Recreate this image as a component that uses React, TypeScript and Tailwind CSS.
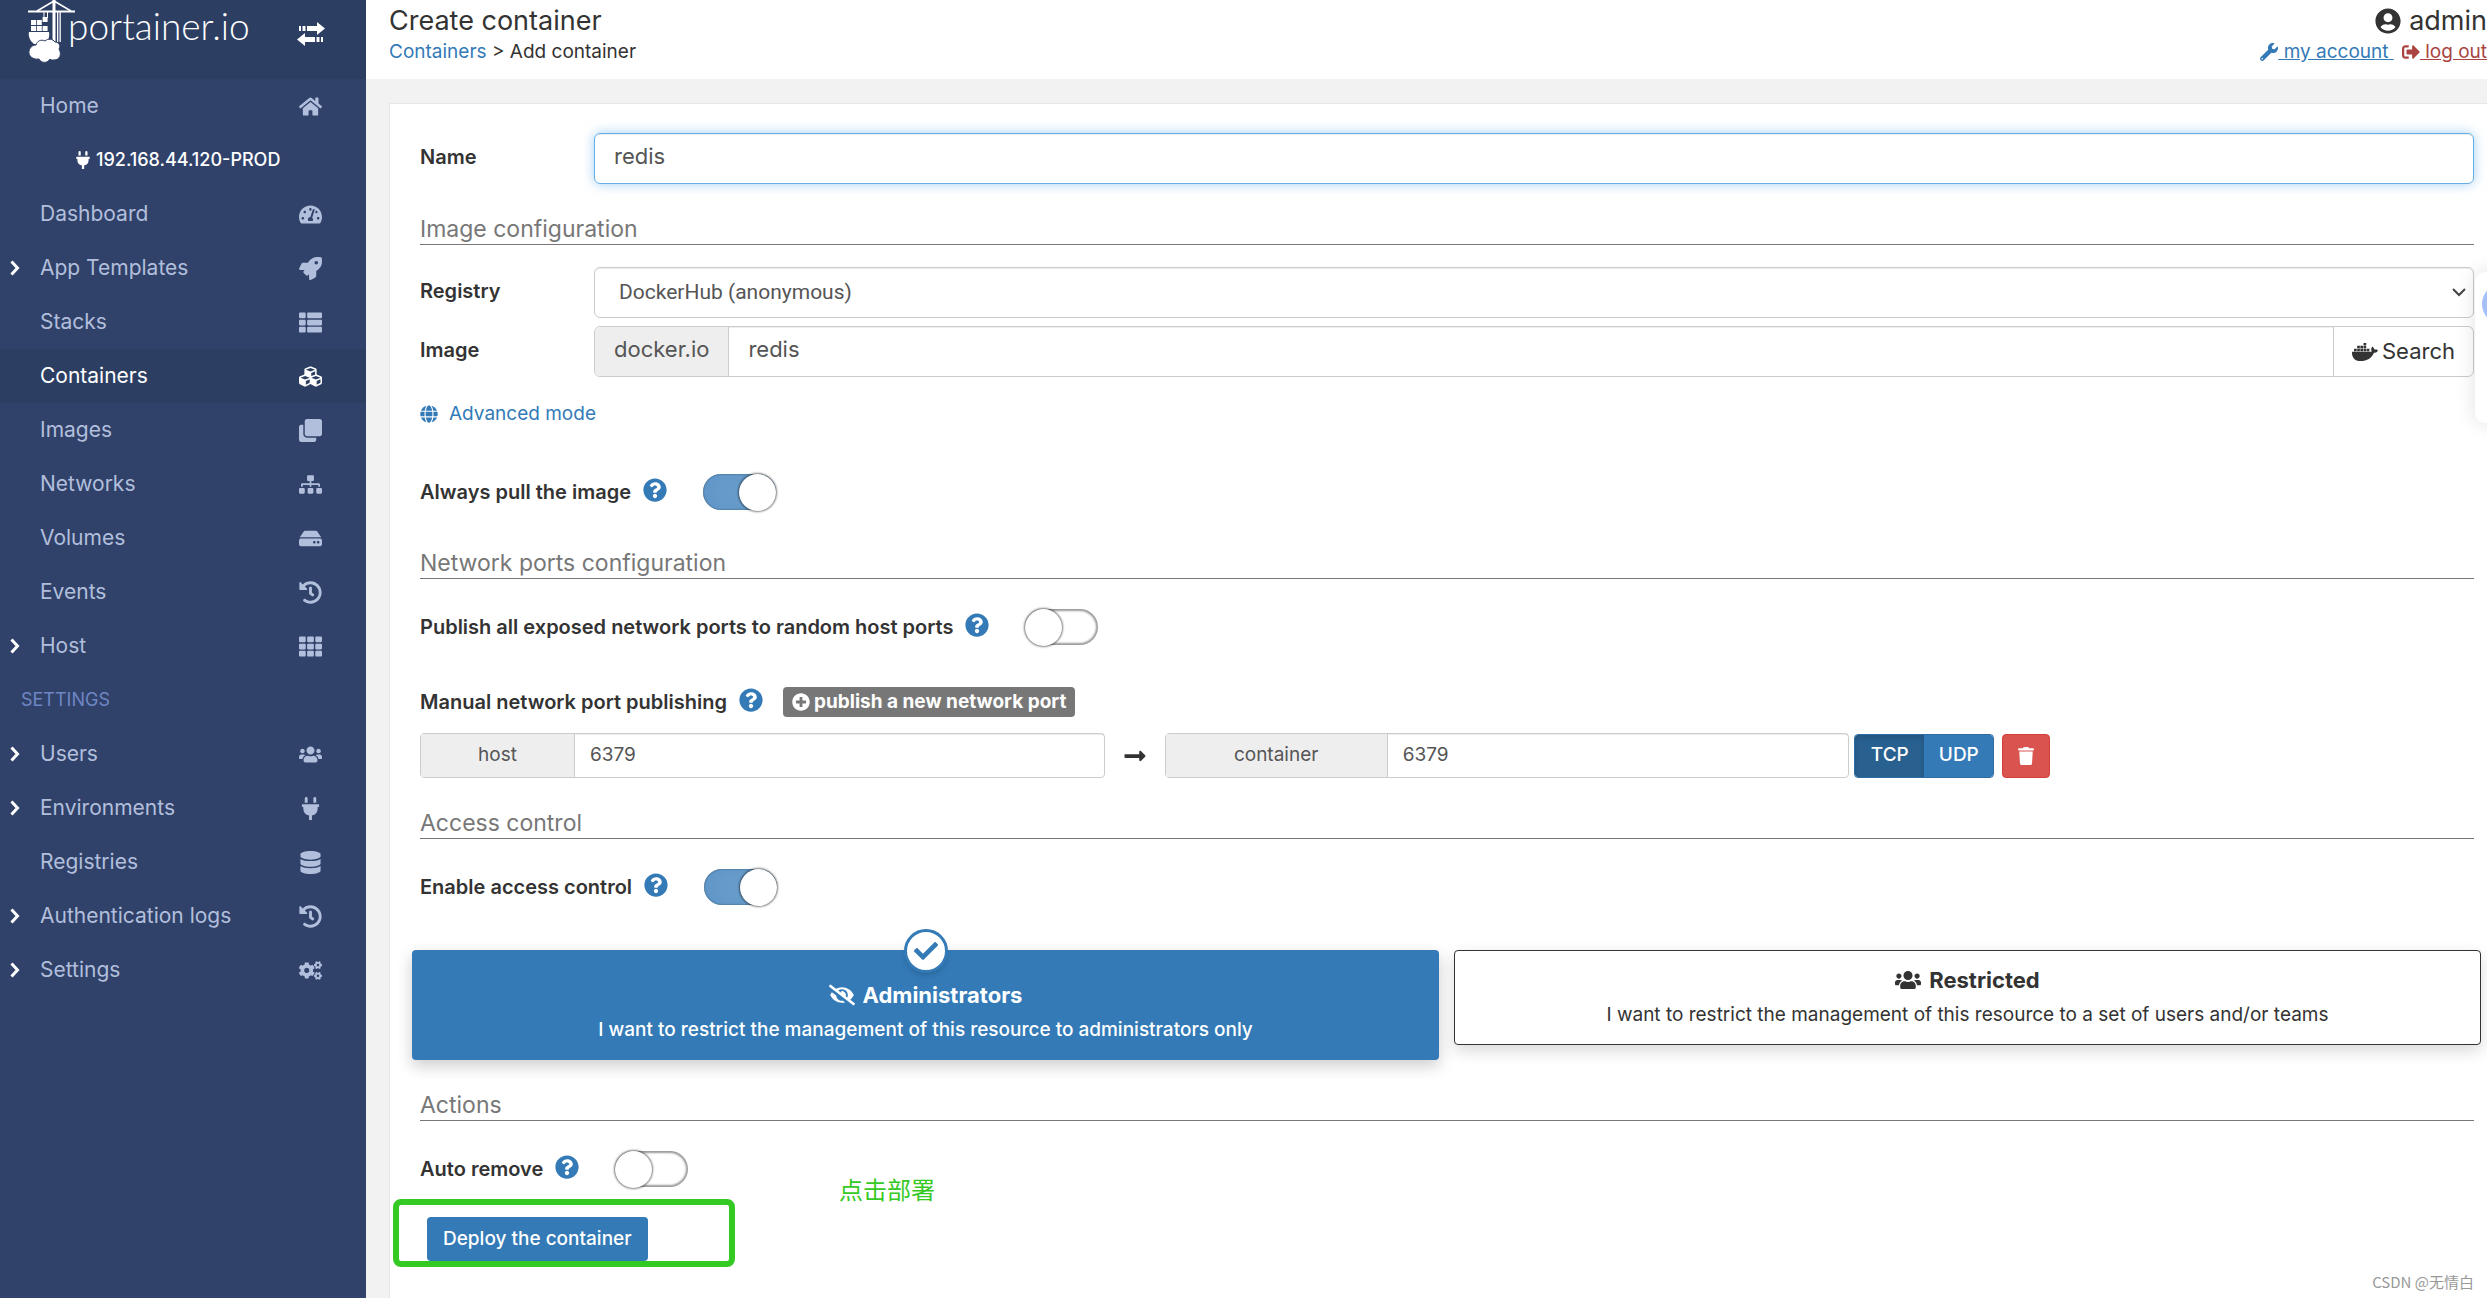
import { useState } from "react";
import type { ReactNode } from "react";
import type { IconType } from "react-icons";
import {
  FaCheck, FaClone, FaCogs, FaCubes, FaDatabase, FaDocker, FaEyeSlash, FaGlobe, FaHdd, FaHistory, FaHome,
  FaLongArrowAltRight, FaPlug, FaPlusCircle, FaQuestionCircle, FaRocket, FaSignOutAlt, FaSitemap,
  FaTachometerAlt, FaTh, FaThList, FaTrash, FaUserCircle, FaUsers, FaWrench,
} from "react-icons/fa";

type MenuItem = {
  label: string;
  icon: IconType;
  expandable?: boolean;
  active?: boolean;
};

const mainMenu: MenuItem[] = [
  { label: "Dashboard", icon: FaTachometerAlt },
  { label: "App Templates", icon: FaRocket, expandable: true },
  { label: "Stacks", icon: FaThList },
  { label: "Containers", icon: FaCubes, active: true },
  { label: "Images", icon: FaClone },
  { label: "Networks", icon: FaSitemap },
  { label: "Volumes", icon: FaHdd },
  { label: "Events", icon: FaHistory },
  { label: "Host", icon: FaTh, expandable: true },
];

const settingsMenu: MenuItem[] = [
  { label: "Users", icon: FaUsers, expandable: true },
  { label: "Environments", icon: FaPlug, expandable: true },
  { label: "Registries", icon: FaDatabase },
  { label: "Authentication logs", icon: FaHistory, expandable: true },
  { label: "Settings", icon: FaCogs, expandable: true },
];

const Logo = () => (
  <a href="#home" className="flex items-start text-white">
    <svg width="48" height="64" viewBox="0 0 48 64" fill="currentColor" aria-hidden="true">
      <path d="M0 10.5h47v2H0z" />
      <path d="M26 1L9 11M26 1l17 10" stroke="currentColor" strokeWidth="1.6" fill="none" />
      <path d="M24.5 0h3v42h-3zM29 12h1.3v30H29zM31.500 12h1.300v30h-1.300z" />
      <path d="M15.500 12h1v6h-1zM19 12h1v6h-1z" />
      <path d="M3 20h5v5H3zM8.800 20h5v5h-5zM3 26h5v5H3zM8.800 26h5v5h-5zM14.600 17h5v5h-5zM14.600 26h5v5h-5z" />
      <path d="M1 32h20c1 5-1 9-4 12H6c-4-3-6-8-5-12z" />
      <path
        d="M8 45c1-4 5-6 9-4 3-3 8-2 10 1 4 0 6 4 4 7 3 5 1 11-5 11-2 0-3 0-4-1-3 5-9 4-11 0-6 1-11-3-10-8 1-4 4-6 7-6z"
        stroke="#2d3e63"
        strokeWidth="1"
      />
    </svg>
    <span className="-ml-2 pt-2 font-[Lato] text-[37px] leading-9 font-light">portainer.io</span>
  </a>
);

const SideLink = ({ label, icon: Icon, expandable, active }: MenuItem) => (
  <li>
    <a
      href="#menu"
      className={`flex h-[54px] items-center pl-[10px] pr-10 text-[21px] ${active ? "bg-[#2c3e62] text-white" : "text-[#b2bfdc]"}`}
    >
      <span className="w-[30px] text-white">
        {expandable && (
          <svg width="10" height="16" viewBox="0 0 10 16" fill="none" stroke="currentColor" strokeWidth="3">
            <path d="M1.500 1.500L7.500 8l-6 6.500" />
          </svg>
        )}
      </span>
      <span className="flex-1">{label}</span>
      <span className="flex w-8 justify-center">
        <Icon size={23} />
      </span>
    </a>
  </li>
);

const Sidebar = () => (
  <nav className="w-[366px] shrink-0 bg-[#30426a]">
    <div className="flex h-[79px] justify-between bg-[#2d3e63] pl-7 pr-[41px]">
      <Logo />
      <button aria-label="Toggle sidebar" className="h-[68px] text-white">
        <svg width="28" height="24" viewBox="0 0 28 24" fill="currentColor">
          <path d="M2 4h2v5H2zM5.500 4h3v5h-3zM10 4h10V0l8 6.500-8 6.500V9H10z" />
          <path d="M26 15h-2v5h2zM22.500 15h-3v5h3zM18 15H8v-4l-8 6.500L8 24v-4h10z" />
        </svg>
      </button>
    </div>
    <ul>
      <SideLink label="Home" icon={FaHome} />
      <li className="flex h-[54px] items-center gap-1 pl-[74px] text-lg font-medium text-white">
        <FaPlug size={18} />
        192.168.44.120-PROD
      </li>
      {mainMenu.map((item) => <SideLink key={item.label} {...item} />)}
      <li className="flex h-[54px] items-center pl-[21px] text-lg text-[#6f86c4]">SETTINGS</li>
      {settingsMenu.map((item) => <SideLink key={item.label} {...item} />)}
    </ul>
  </nav>
);

const SectionTitle = ({ children }: { children: ReactNode }) => (
  <h2 className="mt-[30px] border-b border-[#777] text-[23px] leading-[30px] text-[#777]">{children}</h2>
);

const Help = () => <FaQuestionCircle size={24} className="mb-1 ml-3 text-[#337ab7]" />;

const Toggle = ({ id, label, defaultChecked }: { id: string; label: string; defaultChecked?: boolean }) => (
  <div className="flex h-9 items-center">
    <label htmlFor={id} className="text-xl font-semibold">{label}</label>
    <Help />
    <input
      id={id}
      type="checkbox"
      defaultChecked={defaultChecked}
      className="ml-9 flex h-9 w-[73px] appearance-none items-center rounded-full shadow-[inset_0_0_2px_2px_rgba(0,0,0,0.4)] before:size-[37px] before:shrink-0 before:rounded-full before:bg-white before:shadow-[0_0_2px_1px_rgba(0,0,0,0.5)] checked:justify-end checked:bg-[#73a3cf] checked:shadow-[inset_0_0_2px_rgba(0,0,0,0.5),inset_0_0_40px_rgba(51,122,183,0.4)]"
    />
  </div>
);

const PortInput = ({ id, label, value, labelWidth }: { id: string; label: string; value: string; labelWidth: string }) => (
  <div className="flex h-[45px] w-1/3 rounded border border-[#ccc] text-[19px] text-[#555]">
    <label htmlFor={id} className={`flex shrink-0 items-center justify-center border-r border-[#ccc] bg-[#eee] ${labelWidth}`}>
      {label}
    </label>
    <input
      id={id}
      defaultValue={value}
      className="min-w-0 flex-1 px-[15px] shadow-[inset_0_1px_1px_rgba(0,0,0,0.075)] outline-none"
    />
  </div>
);

const Header = () => (
  <header className="flex h-[79px] justify-between bg-white pl-[23px]">
    <div>
      <h1 className="pt-1 text-[27px] leading-[34px]">Create container</h1>
      <p className="text-[19px] leading-7">
        <a href="#containers" className="text-[#337ab7]">Containers</a> &gt; Add container
      </p>
    </div>
    <div className="flex flex-col items-end">
      <p className="flex items-center gap-2 pt-1 text-[27px] leading-[34px]">
        <FaUserCircle size={26} />
        admin
      </p>
      <div className="flex gap-2 text-[19px] leading-7">
        <a href="#account" className="flex items-center text-[#337ab7]">
          <FaWrench size={18} />
          <span className="whitespace-pre underline"> my account </span>
        </a>
        <a href="#logout" className="flex items-center text-[#a94442]">
          <FaSignOutAlt size={18} />
          <span className="whitespace-pre underline"> log out</span>
        </a>
      </div>
    </div>
  </header>
);

const ContainerForm = () => {
  const [protocol, setProtocol] = useState("TCP");

  return (
    <form className="flex-1 border-l border-t border-[#e7e7e7] bg-white pb-9 pl-[30px] pr-[13px] pt-[29px]">
      <div className="flex h-[51px]">
        <label htmlFor="name" className="w-[174px] shrink-0 pt-3 text-xl leading-6 font-semibold">Name</label>
        <input
          id="name"
          defaultValue="redis"
          className="min-w-0 flex-1 rounded-md border border-[#66afe9] px-[19px] pb-1 text-[22px] text-[#555] shadow-[inset_0_1px_1px_rgba(0,0,0,0.075),0_0_12px_rgba(102,175,233,0.6)] outline-none"
        />
      </div>

      <SectionTitle>Image configuration</SectionTitle>
      <div className="mt-[22px] flex h-[51px]">
        <label htmlFor="registry" className="w-[174px] shrink-0 pt-3 text-xl leading-6 font-semibold">Registry</label>
        <div className="relative flex flex-1">
          <select
            id="registry"
            className="flex-1 appearance-none rounded-md border border-[#ccc] px-6 font-[Roboto] text-[21px] text-[#555] shadow-[inset_0_1px_1px_rgba(0,0,0,0.075)]"
          >
            <option>DockerHub (anonymous)</option>
          </select>
          <svg className="absolute right-2 top-[21px]" width="14" height="9" viewBox="0 0 14 9" fill="none" stroke="#444" strokeWidth="2">
            <path d="M1 1l6 6 6-6" />
          </svg>
        </div>
      </div>
      <div className="mt-2 flex h-[51px]">
        <label htmlFor="image" className="w-[174px] shrink-0 pt-3 text-xl leading-6 font-semibold">Image</label>
        <div className="flex min-w-0 flex-1 rounded-md border border-[#ccc] text-[22px] text-[#555]">
          <span className="flex items-center rounded-l-md border-r border-[#ccc] bg-[#eee] px-[19px] pb-1">docker.io</span>
          <input
            id="image"
            defaultValue="redis"
            className="min-w-0 flex-1 px-[19px] pb-1 shadow-[inset_0_1px_1px_rgba(0,0,0,0.075)] outline-none"
          />
          <button type="button" className="flex items-center gap-1 border-l border-[#ccc] px-[18px] text-[#333]">
            <FaDocker size={26} />
            Search
          </button>
        </div>
      </div>
      <a href="#advanced" className="mt-[25px] flex items-center gap-[11px] text-[19px] leading-6 text-[#337ab7]">
        <FaGlobe size={18} />
        Advanced mode
      </a>
      <div className="mt-12 mb-[38px]">
        <Toggle id="pull" label="Always pull the image" defaultChecked />
      </div>

      <SectionTitle>Network ports configuration</SectionTitle>
      <div className="mt-[30px]">
        <Toggle id="publish-all" label="Publish all exposed network ports to random host ports" />
      </div>
      <div className="mt-[42px] flex h-[30px] items-center">
        <span className="text-xl font-semibold">Manual network port publishing</span>
        <Help />
        <button type="button" className="ml-5 flex h-[30px] items-center gap-1 rounded bg-[#777] px-[9px] text-[19px] font-bold text-white">
          <FaPlusCircle size={18} />
          publish a new network port
        </button>
      </div>
      <div className="mt-4 flex items-center">
        <PortInput id="host-port" label="host" value="6379" labelWidth="w-[154px]" />
        <FaLongArrowAltRight size={24} className="mx-[18px] text-[#333]" />
        <PortInput id="container-port" label="container" value="6379" labelWidth="w-[222px]" />
        <div className="ml-[5px] flex h-11 overflow-hidden rounded border border-[#2e6da4] text-[19px] text-white">
          {["TCP", "UDP"].map((name) => (
            <button
              key={name}
              type="button"
              onClick={() => setProtocol(name)}
              className={`w-[69px] font-medium ${protocol === name ? "bg-[#286090] shadow-[inset_0_3px_5px_rgba(0,0,0,0.125)]" : "bg-[#337ab7]"}`}
            >
              {name}
            </button>
          ))}
        </div>
        <button type="button" aria-label="Remove port" className="ml-2 flex h-11 w-12 items-center justify-center rounded border border-[#d43f3a] bg-[#d9534f] text-white">
          <FaTrash size={18} />
        </button>
      </div>

      <SectionTitle>Access control</SectionTitle>
      <div className="mt-[30px]">
        <Toggle id="access" label="Enable access control" defaultChecked />
      </div>
      <div className="-ml-2 -mr-[7px] mt-[45px] grid grid-cols-2 items-start gap-[15px] text-center">
        <button type="button" className="relative flex h-[110px] flex-col items-center rounded-sm bg-[#337ab7] pt-7 text-white shadow-[0_6px_16px_rgba(0,0,0,0.2)]">
          <span className="absolute -top-[21px] left-1/2 flex size-11 -translate-x-1/2 items-center justify-center rounded-full border-3 border-[#337ab7] bg-white text-[#337ab7] shadow-md">
            <FaCheck size={24} />
          </span>
          <span className="flex items-center gap-2 text-[22px] leading-[34px] font-bold">
            <FaEyeSlash size={26} />
            Administrators
          </span>
          <span className="text-[19px] leading-9 font-medium">I want to restrict the management of this resource to administrators only</span>
        </button>
        <button type="button" className="flex h-[95px] flex-col items-center rounded-sm border border-[#333] bg-white pt-3 shadow-[0_6px_16px_rgba(0,0,0,0.15)]">
          <span className="flex items-center gap-2 text-[22px] leading-[34px] font-bold">
            <FaUsers size={26} />
            Restricted
          </span>
          <span className="text-[19px] leading-9">I want to restrict the management of this resource to a set of users and/or teams</span>
        </button>
      </div>

      <SectionTitle>Actions</SectionTitle>
      <div className="mt-[30px]">
        <Toggle id="auto-remove" label="Auto remove" />
      </div>
      <div className="relative -ml-[27px] mt-3 w-[342px] rounded-lg border-6 border-[#35c924] pl-7 pt-3">
        <button type="submit" className="h-11 rounded bg-[#337ab7] px-4 text-[19px] font-medium text-white">Deploy the container</button>
        <span className="absolute -top-9 left-[440px] whitespace-nowrap font-['Noto_Sans_CJK_SC',sans-serif] text-2xl leading-10 text-[#35c924]">
          点击部署
        </span>
      </div>
    </form>
  );
};

const App = () => (
  <div className="relative flex min-h-screen overflow-hidden bg-[#f2f2f2] font-[Inter,sans-serif] text-[#333]">
    <Sidebar />
    <div className="flex min-w-0 flex-1 flex-col">
      <Header />
      <main className="flex flex-1 flex-col pl-[23px] pt-6">
        <ContainerForm />
      </main>
    </div>
    {/* floating assistant docked to the right edge */}
    <aside className="absolute -right-10 top-[272px] h-[151px] w-[52px] rounded-[10px] bg-white pl-[7px] pt-3 shadow-[0_0_20px_rgba(0,0,0,0.12)]">
      <div className="size-10 rounded-full bg-[#a3c0f8]" />
    </aside>
    <span className="absolute bottom-3 right-[13px] font-['Noto_Sans_CJK_SC',sans-serif] text-[15px] leading-[18px] text-[#999]">CSDN @无情白</span>
  </div>
);

export default App;
